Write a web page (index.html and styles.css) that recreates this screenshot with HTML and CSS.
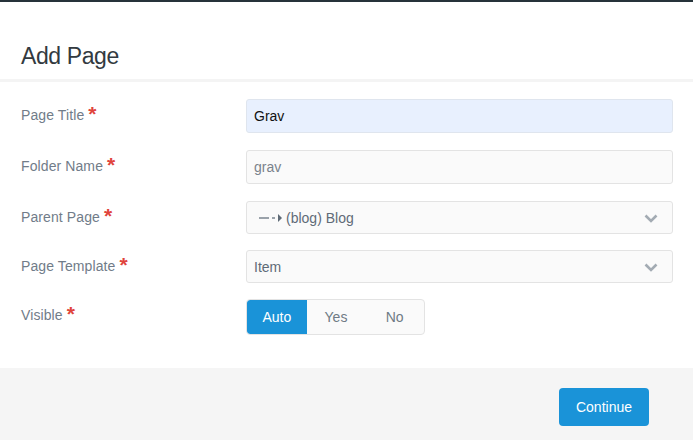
FILE: index.html
```html
<!DOCTYPE html>
<html>
<head>
<meta charset="utf-8">
<link rel="stylesheet" href="styles.css">
</head>
<body>
<div class="modal">
  <div class="header"><h1 class="title">Add Page</h1></div>
  <form class="body">
    <div class="row r1">
      <label class="label">Page Title <span class="req">*</span></label>
      <div class="field autofill">Grav</div>
    </div>
    <div class="row r2">
      <label class="label">Folder Name <span class="req">*</span></label>
      <div class="field">grav</div>
    </div>
    <div class="row r3">
      <label class="label">Parent Page <span class="req">*</span></label>
      <div class="field select"><span class="prefix"><span class="dash"></span><span class="hy"></span><span class="tri"></span></span>(blog) Blog
        <svg class="chev" width="14" height="9" viewBox="0 0 14 9"><path d="M1.5 1.5 L7 7 L12.5 1.5" fill="none" stroke="#a3abb3" stroke-width="2.6"/></svg>
      </div>
    </div>
    <div class="row r4">
      <label class="label">Page Template <span class="req">*</span></label>
      <div class="field select">Item
        <svg class="chev" width="14" height="9" viewBox="0 0 14 9"><path d="M1.5 1.5 L7 7 L12.5 1.5" fill="none" stroke="#a3abb3" stroke-width="2.6"/></svg>
      </div>
    </div>
    <div class="row r5">
      <label class="label">Visible <span class="req">*</span></label>
      <div class="toggle">
        <span class="opt active">Auto</span>
        <span class="opt">Yes</span>
        <span class="opt">No</span>
      </div>
    </div>
  </form>
  <div class="footer">
    <button class="btn" type="button">Continue</button>
  </div>
</div>
</body>
</html>
```
FILE: styles.css
```css
html, body {
  margin: 0;
  padding: 0;
  background: #fff;
}
body {
  font-family: "Liberation Sans", Arial, sans-serif;
  width: 693px;
  height: 440px;
  overflow: hidden;
}
.modal {
  border-top: 2px solid #26333a;
  display: flex;
  flex-direction: column;
  height: 438px;
}
.header {
  height: 80px;
  flex: none;
  border-bottom: 3px solid #f4f4f4;
  display: flex;
  align-items: flex-end;
  padding-left: 21px;
  box-sizing: border-box;
  padding-bottom: 9px;
}
.title {
  margin: 0;
  font-weight: normal;
  font-size: 23px;
  color: #333a40;
  letter-spacing: -0.4px;
}
.body {
  margin: 0;
  padding: 17px 20px 33px 21px;
  display: flex;
  flex-direction: column;
}
.row {
  display: flex;
  align-items: flex-start;
}
.r1, .r2 { margin-bottom: 17px; }
.r3, .r4 { margin-bottom: 16px; }
.label {
  width: 225px;
  flex: none;
  font-size: 14px;
  color: #717c89;
  padding-top: 8px;
  letter-spacing: 0.1px;
}
.req {
  color: #e0443c;
  font-size: 21px;
  font-weight: bold;
  line-height: 10px;
  position: relative;
  top: 1px;
}
.field {
  width: 427px;
  height: 34px;
  box-sizing: border-box;
  border: 1px solid #e3e3e3;
  border-radius: 3px;
  background: #fafafa;
  font-size: 14px;
  color: #7a838c;
  padding: 0 7px;
  display: flex;
  align-items: center;
}
.autofill {
  background: #e8f0fe;
  color: #111;
  border-color: #dfe5ee;
}
.select {
  height: 33px;
  color: #5f6b77;
  position: relative;
}
.prefix {
  display: inline-flex;
  align-items: center;
  margin-left: 5px;
  margin-right: 4px;
}
.dash {
  width: 10px;
  height: 2px;
  background: #9aa2aa;
}
.hy {
  width: 3px;
  height: 2px;
  background: #9aa2aa;
  margin-left: 3px;
}
.tri {
  width: 0;
  height: 0;
  border-top: 4px solid transparent;
  border-bottom: 4px solid transparent;
  border-left: 4px solid #5f6b77;
  margin-left: 3px;
}
.chev {
  position: absolute;
  right: 14px;
  top: 12px;
}
.toggle {
  display: flex;
  border: 1px solid #e3e3e3;
  border-radius: 4px;
  background: #fafafa;
  height: 36px;
  box-sizing: border-box;
  overflow: hidden;
  width: 179px;
}
.opt {
  width: 59px;
  display: flex;
  align-items: center;
  justify-content: center;
  font-size: 14px;
  color: #6f7a85;
}
.opt.active {
  width: 60px;
  background: #1a93d8;
  color: #fff;
  border-radius: 3px 0 0 3px;
}
.footer {
  flex: 1;
  background: #f5f5f5;
  display: flex;
  justify-content: flex-end;
  align-items: flex-start;
  padding: 20px 44px 0 0;
}
.btn {
  width: 90px;
  height: 38px;
  border: none;
  border-radius: 4px;
  background: #1a93d8;
  color: #fff;
  font-family: "Liberation Sans", Arial, sans-serif;
  font-size: 14px;
  padding: 0;
}
```
